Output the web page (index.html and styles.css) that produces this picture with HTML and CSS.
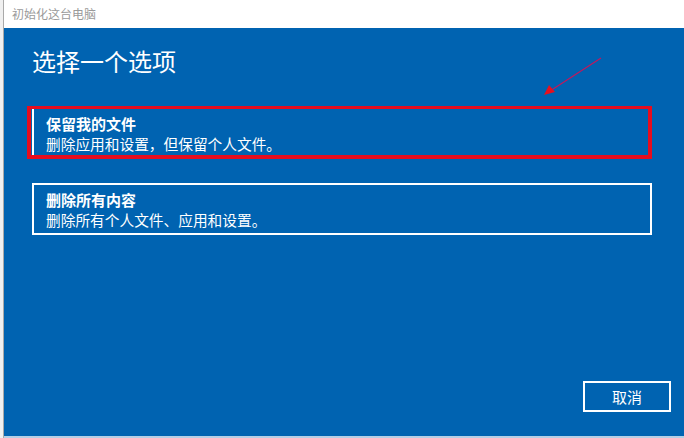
FILE: index.html
```html
<!DOCTYPE html>
<html lang="zh-CN">
<head>
<meta charset="utf-8">
<title>初始化这台电脑</title>
<link rel="stylesheet" href="styles.css">
</head>
<body>
<div class="window">
  <div class="titlebar">初始化这台电脑</div>
  <div class="content">
    <h1 class="heading">选择一个选项</h1>
    <div class="options">
      <div class="option option-marked">
        <div class="option-title">保留我的文件</div>
        <div class="option-desc">删除应用和设置，但保留个人文件。</div>
        <div class="highlight"></div>
      </div>
      <div class="option">
        <div class="option-title">删除所有内容</div>
        <div class="option-desc">删除所有个人文件、应用和设置。</div>
      </div>
    </div>
    <div class="footer">
      <div class="btn">取消</div>
    </div>
    <svg class="arrow" width="70" height="50" viewBox="0 0 70 50">
      <line x1="65" y1="5" x2="14" y2="38" stroke="#c2185b" stroke-width="1.2"/>
      <polygon points="8,42 13,32 19,39" fill="#e8101e"/>
    </svg>
  </div>
</div>
</body>
</html>
```

FILE: styles.css
```css
html, body {
  margin: 0;
  padding: 0;
}
body {
  width: 684px;
  height: 438px;
  overflow: hidden;
  font-family: "Noto Sans CJK SC", "Noto Sans", sans-serif;
  background: #f0f0f0;
}
.window {
  display: flex;
  flex-direction: column;
  height: 438px;
  margin-left: 3px;
  border-left: 1px solid #a9a9a9;
  box-sizing: border-box;
}
.titlebar {
  height: 28px;
  line-height: 28px;
  background: #ffffff;
  color: #9a9a9a;
  font-size: 12px;
  padding-left: 8px;
  flex: none;
}
.content {
  position: relative;
  flex: 1;
  display: flex;
  flex-direction: column;
  background: #0063b1;
  border-bottom: 2px solid #b5cfe6;
  padding: 17px 0 0 28px;
  color: #ffffff;
}
.heading {
  margin: 0;
  font-size: 24px;
  line-height: 32px;
  font-weight: 400;
}
.options {
  display: flex;
  flex-direction: column;
  gap: 24px;
  margin-top: 30px;
}
.option {
  position: relative;
  width: 620px;
  height: 52px;
  box-sizing: border-box;
  border: 2px solid #ffffff;
  padding: 5px 12px 0;
}
.option-title {
  font-size: 15px;
  font-weight: 700;
  line-height: 20px;
}
.option-desc {
  font-size: 14.7px;
  line-height: 20px;
}
.highlight {
  position: absolute;
  left: -7px;
  top: -3px;
  right: -2px;
  bottom: -2px;
  border: 4px solid #e60d1e;
  border-top-width: 3px;
}
.footer {
  margin-top: auto;
  display: flex;
  justify-content: flex-end;
  padding: 0 13px 24px 0;
}
.btn {
  width: 88px;
  height: 31px;
  box-sizing: border-box;
  border: 2px solid #ffffff;
  display: flex;
  align-items: center;
  justify-content: center;
  font-size: 15px;
}
.arrow {
  position: absolute;
  left: 532px;
  top: 25px;
}
```
